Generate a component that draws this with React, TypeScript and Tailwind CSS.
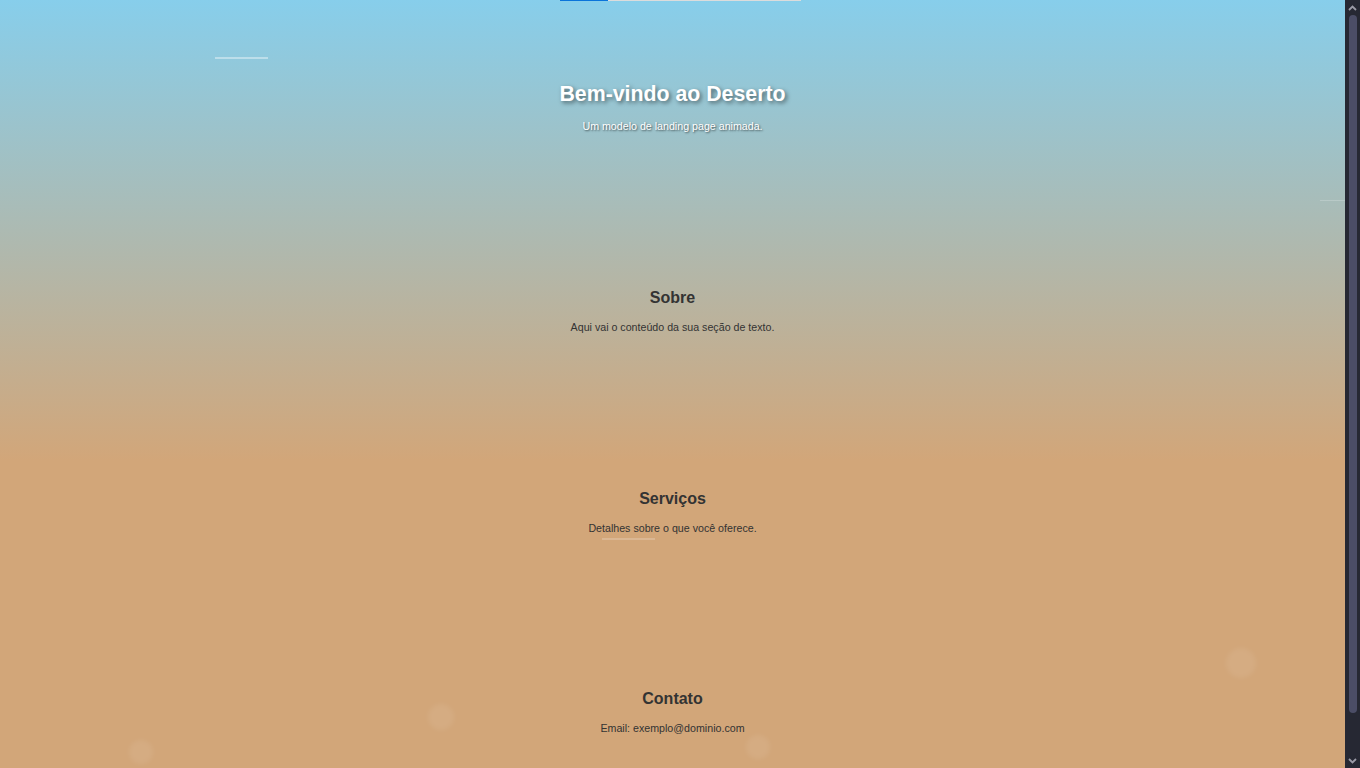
import React from "react";

const sections = [
  { title: "Sobre", text: "Aqui vai o conteúdo da sua seção de texto.", h: "h-[201px]" },
  { title: "Serviços", text: "Detalhes sobre o que você oferece.", h: "h-[200px]" },
  { title: "Contato", text: "Email: exemplo@dominio.com", h: "h-[123px]" },
];

function Bubble({ className }: { className: string }) {
  return <div className={`absolute rounded-full bg-white/[0.07] blur-[2px] ${className}`} />;
}

function Chevron({ up }: { up?: boolean }) {
  return (
    <div className="flex h-[15px] items-center justify-center">
      <svg width="9" height="6" viewBox="0 0 9 6" fill="none">
        <path
          d={up ? "M1 5 L4.5 1.5 L8 5" : "M1 1 L4.5 4.5 L8 1"}
          stroke="#9a9aa6"
          strokeWidth="1.8"
        />
      </svg>
    </div>
  );
}

export default function App() {
  return (
    <div className="flex h-screen overflow-hidden">
      <main className="relative h-screen flex-1 overflow-hidden bg-[linear-gradient(to_bottom,#87CEEB_0px,#D2A679_461px)] font-['Liberation_Sans',Arial,sans-serif] text-[#333]">
        {/* loading bar */}
        <div className="absolute left-[560px] top-0 flex h-px w-[241px] bg-[#dcdcdc]">
          <div className="h-full w-[48px] bg-[#0a74da]" />
        </div>

        {/* wind streaks */}
        <div className="absolute left-[215px] top-[57px] h-[2px] w-[53px] bg-white/40" />
        <div className="absolute left-[1320px] top-[200px] h-px w-[30px] bg-white/20" />
        <div className="absolute left-[602px] top-[538px] h-[2px] w-[53px] bg-white/20" />

        {/* sand bubbles */}
        <Bubble className="left-[129px] top-[740px] h-[24px] w-[24px]" />
        <Bubble className="left-[428px] top-[704px] h-[26px] w-[26px]" />
        <Bubble className="left-[746px] top-[735px] h-[24px] w-[24px]" />
        <Bubble className="left-[1226px] top-[648px] h-[30px] w-[30px]" />

        <header className="flex h-[288px] flex-col items-center pt-[81px] text-white">
          <h1 className="text-[21.3px] font-bold leading-[26px] [text-shadow:2px_2px_4px_rgba(0,0,0,0.5)]">
            Bem-vindo ao Deserto
          </h1>
          <p className="mt-[12px] text-[10.67px] leading-[14px] [text-shadow:1px_1px_2px_rgba(0,0,0,0.6)]">
            Um modelo de landing page animada.
          </p>
        </header>

        {sections.map((s) => (
          <section key={s.title} className={`flex flex-col items-center ${s.h}`}>
            <h2 className="text-[16px] font-bold leading-[20px]">{s.title}</h2>
            <p className="mt-[12px] text-[10.67px] leading-[14px]">{s.text}</p>
          </section>
        ))}
      </main>

      {/* scrollbar */}
      <aside className="flex w-[15px] flex-col bg-[#262833]">
        <Chevron up />
        <div className="flex flex-1 flex-col pb-[40px] pl-[4px] pr-[3px]">
          <div className="flex-1 rounded-full bg-[#4b4d66]" />
        </div>
        <Chevron />
      </aside>
    </div>
  );
}
